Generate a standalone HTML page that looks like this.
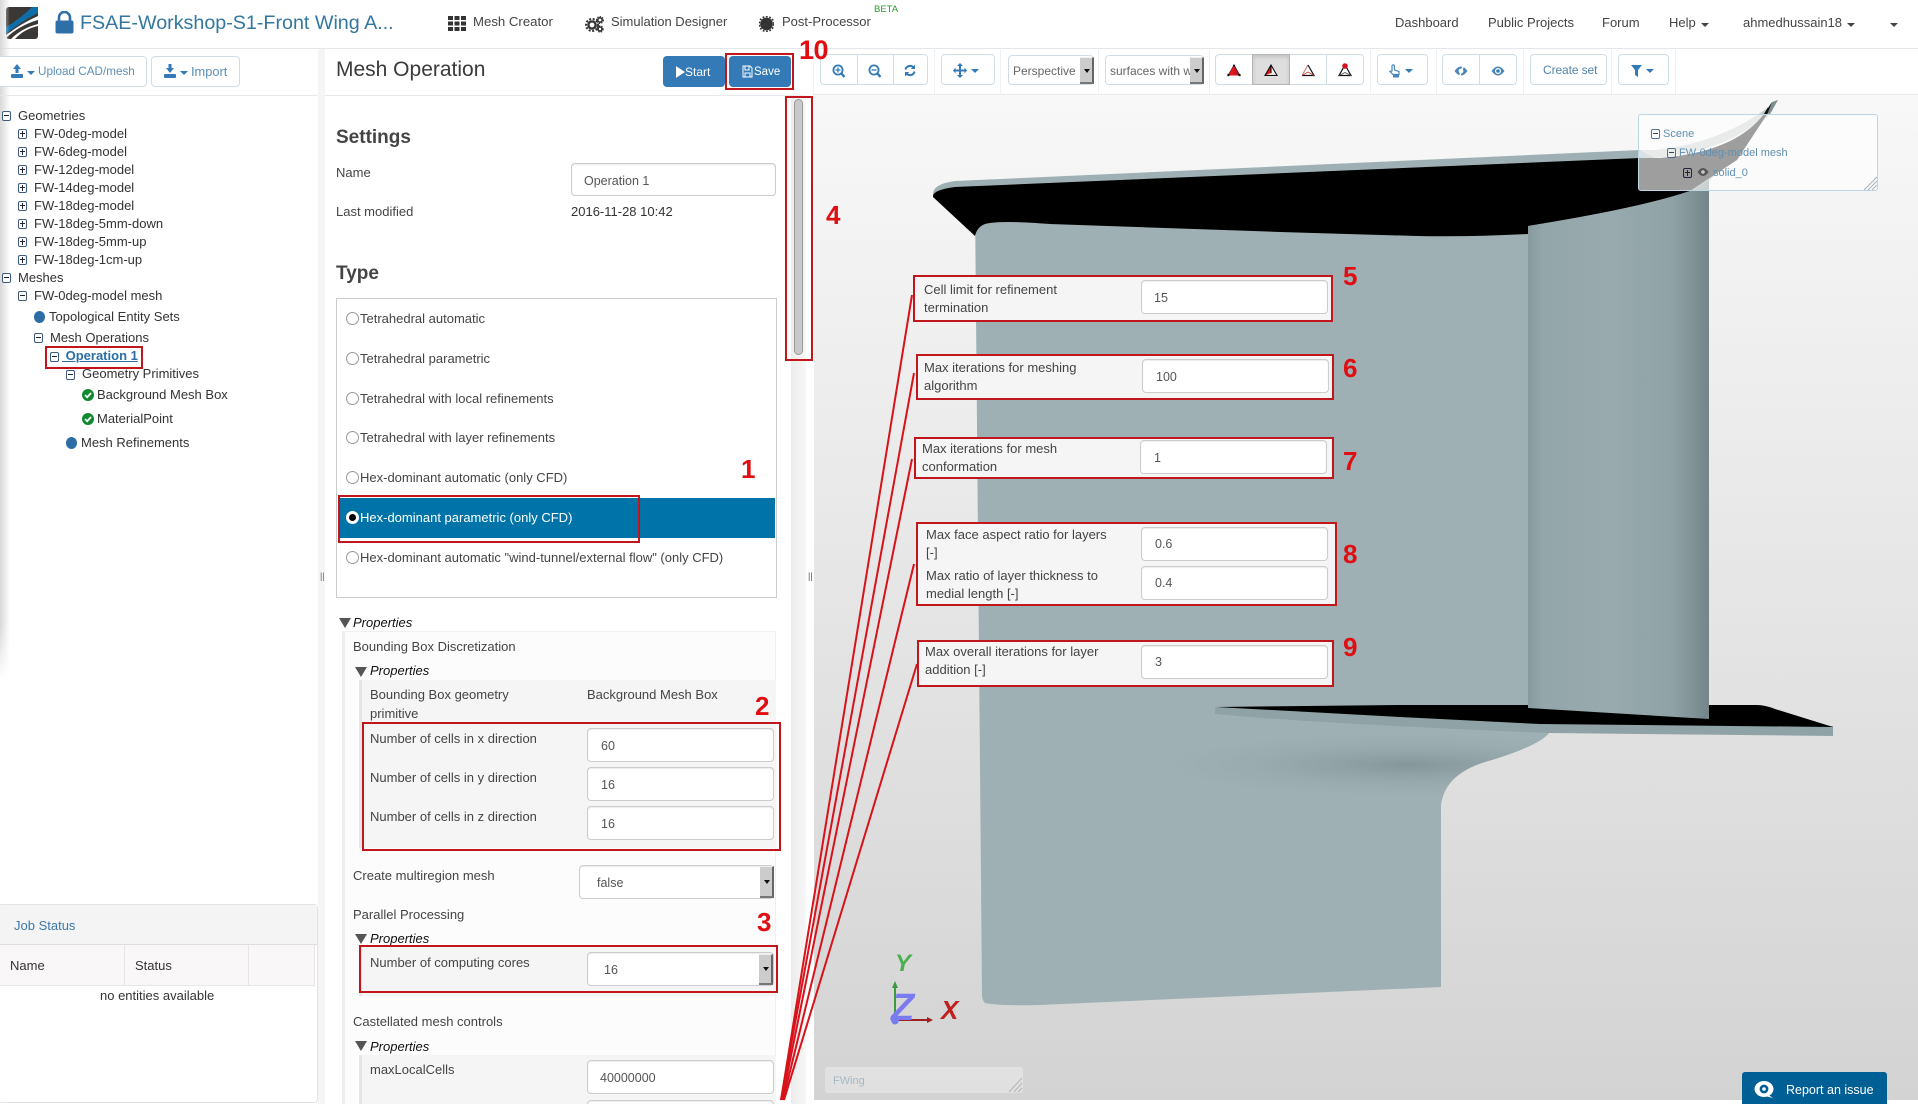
<!DOCTYPE html>
<html><head><meta charset="utf-8"><title>Mesh Operation</title>
<style>
html,body{margin:0;padding:0;background:#fff}
#p{position:relative;width:1918px;height:1104px;overflow:hidden;font-family:"Liberation Sans",sans-serif;font-size:13px;color:#444;background:#fff}
#p div,#p span,#p svg{position:absolute}
.t{white-space:nowrap;line-height:20px;height:20px;margin-top:-9px}
.z{margin-top:-10px}
.n{font-size:13px;color:#444;margin-top:-10px}
.b{color:#333}
.tr{color:#333;margin-top:-10px}
.r{color:#e00d12;font-weight:bold;font-size:26px;line-height:30px;height:30px;margin-top:-15px;white-space:nowrap}
.box{box-sizing:border-box;border:2px solid #c2161d}
.inp{box-sizing:border-box;background:#fff;border:1px solid #ccc;border-radius:4px;box-shadow:inset 0 1px 1px rgba(0,0,0,.08);color:#555;line-height:34px;font-size:12.5px}
.panel{box-sizing:border-box;background:#f5f5f5}
.m,.q{box-sizing:border-box;width:9px;height:10px;border:1px solid #3d5a80;border-radius:2px;margin-top:-5px;background:#fff}
.m:after,.q:after{content:"";position:absolute;left:1px;top:3px;width:5px;height:1px;background:#223}
.q:before{content:"";position:absolute;left:3px;top:1px;width:1px;height:6px;background:#223}
.dot{width:11px;height:12px;border-radius:50%;background:#2d6ca5;margin-top:-6px}
.ok{width:12px;height:12px;margin-top:-6px}
.btn{box-sizing:border-box;background:#fff;border:1px solid #cfdde6;border-radius:4px}
.sep{width:1px;background:#eef1f3;top:48px;height:46px}
.arr{box-sizing:border-box;background:#ccc;border-right:2px solid #666;border-bottom:2px solid #777;border-top:1px solid #eee}
.arr:after{content:"";position:absolute;left:4px;top:44%;border:3px solid transparent;border-top:4px solid #111;border-bottom:0}
.rad{box-sizing:border-box;width:13px;height:13px;border:1px solid #999;border-radius:50%;background:#fff;margin-top:-6px;left:346px}
.car{width:0;height:0;border-left:4px solid transparent;border-right:4px solid transparent;border-top:4px solid #444}
.tri{width:0;height:0;border-left:6px solid transparent;border-right:6px solid transparent;border-top:10px solid #555}
.it{font-style:italic;color:#111}
</style></head><body>
<div id="p">

<!-- viewer background -->
<div style="left:814px;top:95px;width:1104px;height:1005px;background:linear-gradient(#f8f8f8,#d3d3d3)"></div>

<!-- wing -->
<svg style="left:0;top:0" width="1918" height="1104" viewBox="0 0 1918 1104">
<defs>
<linearGradient id="g2" x1="0" x2="1" y1="0" y2="0"><stop offset="0" stop-color="#86999d"/><stop offset=".08" stop-color="#93a6aa"/><stop offset=".45" stop-color="#98aaae"/><stop offset=".8" stop-color="#8fa2a6"/><stop offset="1" stop-color="#748589"/></linearGradient>
<radialGradient id="sh"><stop offset="0" stop-color="#84969a"/><stop offset="1" stop-color="#9eb0b4" stop-opacity="0"/></radialGradient>
<clipPath id="bc"><path d="M975 200L1709 170V720L1549 733Q1540 745 1492 760Q1445 772 1441 805V987L1040 1005Q1000 1006 985 1003Q982 1000 982 995Z"/></clipPath>
</defs>
<path d="M933 195Q932 184 955 181L1640 150L1655 158L1690 191Z" fill="#9eb0b4"/>
<path d="M1640 150L1655 150Q1725 143 1778 100L1770 110Q1735 150 1655 158Z" fill="#c4cbcb"/>
<path d="M1690 191L1710 180L1773 110L1767 113Z" fill="#b4bebe"/>
<path d="M975 200L1709 170V720L1549 733Q1540 745 1492 760Q1445 772 1441 805V987L1040 1005Q1000 1006 985 1003Q982 1000 982 995Z" fill="#9eb0b4"/>
<g clip-path="url(#bc)"><ellipse cx="1410" cy="765" rx="280" ry="36" fill="url(#sh)"/></g>
<path d="M933 197Q932 190 955 187L1640 158L1660 158Q1735 152 1764 114L1768 107L1766 116L1737 160L1690 191Q1640 208 1528 226V234Q1470 237 1417 236L1280 232L1050 224Q1000 220 985 224Q977 227 975 236Z" fill="#000"/>
<path d="M1772 102L1778 100L1770 114L1766 113Z" fill="#7d8e91"/>
<path d="M1764 114L1772 102L1767 115Z" fill="#111"/>
<path d="M1215 707V714Q1300 722 1500 731L1549 733L1833 736V726L1400 712Z" fill="#8fa2a6"/>
<path d="M1216 707L1400 705L1757 705Q1765 705 1775 709L1833 727L1540 724L1400 717Z" fill="#000"/>
<path d="M1528 226Q1640 208 1690 191L1709 180V719L1528 708Z" fill="url(#g2)"/>
</svg>

<!-- top nav -->
<div style="left:0;top:48px;width:1918px;height:1px;background:#e4e7e9"></div>
<svg style="left:6px;top:7px" width="32" height="32" viewBox="0 0 32 32">
<rect width="32" height="32" rx="3" fill="#3b3735"/>
<path d="M32 0V6Q16 14 0 27V20Q14 12 26 0Z" fill="#0f6da8"/>
<path d="M32 9V13Q14 18 0 31V28Q16 16 32 9Z" fill="#fff"/>
<path d="M32 17V19Q18 22 9 32H5Q16 21 32 17Z" fill="#fff"/>
</svg>
<svg style="left:55px;top:11px" width="19" height="23" viewBox="0 0 19 23"><path d="M4 10V6.5a5.5 5.5 0 0 1 11 0V10" fill="none" stroke="#2f6fa8" stroke-width="2.6"/><rect x="0.5" y="9.5" width="18" height="13" rx="2" fill="#2f6fa8"/></svg>
<div class="t z" style="left:80px;top:23px;font-size:19.7px;color:#33779f">FSAE-Workshop-S1-Front Wing A...</div>
<svg style="left:448px;top:16px" width="18" height="15" viewBox="0 0 18 15" fill="#333"><rect width="5" height="4"/><rect x="6.5" width="5" height="4"/><rect x="13" width="5" height="4"/><rect y="5.5" width="5" height="4"/><rect x="6.5" y="5.5" width="5" height="4"/><rect x="13" y="5.5" width="5" height="4"/><rect y="11" width="5" height="4"/><rect x="6.5" y="11" width="5" height="4"/><rect x="13" y="11" width="5" height="4"/></svg>
<div class="t n" style="left:473px;top:22px;font-size:13.2px">Mesh Creator</div>
<svg style="left:585px;top:15px" width="19" height="18" viewBox="0 0 19 18" fill="none" stroke="#333"><circle cx="7" cy="10" r="3.6" stroke-width="2.4"/><circle cx="7" cy="10" r="6" stroke-width="2" stroke-dasharray="2 1.6"/><circle cx="15" cy="5" r="2.2" stroke-width="1.6"/><circle cx="15" cy="5" r="3.4" stroke-width="1.2" stroke-dasharray="1.4 1.2"/><circle cx="15" cy="14" r="2" stroke-width="1.6"/><circle cx="15" cy="14" r="3.1" stroke-width="1.2" stroke-dasharray="1.4 1.2"/></svg>
<div class="t n" style="left:611px;top:22px">Simulation Designer</div>
<svg style="left:759px;top:16px" width="15" height="16" viewBox="0 0 15 16"><circle cx="7.5" cy="8" r="6.4" fill="#333"/><circle cx="7.5" cy="8" r="7.4" fill="none" stroke="#333" stroke-width="1.6" stroke-dasharray="1.8 1.6"/></svg>
<div class="t n" style="left:782px;top:22px">Post-Processor</div>
<div class="t z" style="left:874px;top:10px;font-size:9.5px;color:#2e9a2e">BETA</div>
<div class="t n" style="left:1395px;top:23px">Dashboard</div>
<div class="t n" style="left:1488px;top:23px">Public Projects</div>
<div class="t n" style="left:1602px;top:23px">Forum</div>
<div class="t n" style="left:1669px;top:23px">Help</div><div class="car" style="left:1701px;top:23px"></div>
<div class="t n" style="left:1743px;top:23px">ahmedhussain18</div><div class="car" style="left:1847px;top:23px"></div>
<div class="car" style="left:1890px;top:23px"></div>

<!-- left panel -->
<div style="left:0;top:0;width:10px;height:680px;background:linear-gradient(90deg,#d8d8d8,rgba(255,255,255,0));-webkit-mask-image:linear-gradient(#000 92%,transparent)"></div>
<div style="left:318px;top:49px;width:7px;height:1055px;background:#f5f5f5"></div>
<div style="left:0;top:95px;width:318px;height:1px;background:#e6e8ea"></div>
<div style="left:325px;top:95px;width:466px;height:1px;background:#e6e8ea"></div>
<div class="t z" style="left:320px;top:576px;font-size:9px;color:#666">||</div>
<div class="btn" style="left:-5px;top:56px;width:152px;height:31px"></div>
<div class="btn" style="left:151px;top:56px;width:89px;height:31px"></div>
<svg style="left:11px;top:64px" width="12" height="14" viewBox="0 0 12 14" fill="#337ab7"><path d="M6 0L10 5H7.5V9H4.5V5H2Z"/><rect y="10" width="12" height="4" rx="1"/></svg>
<div class="car" style="left:27px;top:71px;border-top-color:#337ab7"></div>
<div class="t z" style="left:38px;top:72px;font-size:11.7px;color:#5b90b8">Upload CAD/mesh</div>
<svg style="left:164px;top:64px" width="12" height="14" viewBox="0 0 12 14" fill="#337ab7"><path d="M6 9L10 4H7.5V0H4.5V4H2Z"/><rect y="10" width="12" height="4" rx="1"/></svg>
<div class="car" style="left:180px;top:71px;border-top-color:#337ab7"></div>
<div class="t z" style="left:191px;top:72px;font-size:12.8px;color:#5b90b8">Import</div>

<!-- tree -->
<div class="m" style="left:2px;top:116px"></div><div class="t tr" style="left:18px;top:116px">Geometries</div>
<div class="q" style="left:18px;top:134px"></div><div class="t tr" style="left:34px;top:134px">FW-0deg-model</div>
<div class="q" style="left:18px;top:152px"></div><div class="t tr" style="left:34px;top:152px">FW-6deg-model</div>
<div class="q" style="left:18px;top:170px"></div><div class="t tr" style="left:34px;top:170px">FW-12deg-model</div>
<div class="q" style="left:18px;top:188px"></div><div class="t tr" style="left:34px;top:188px">FW-14deg-model</div>
<div class="q" style="left:18px;top:206px"></div><div class="t tr" style="left:34px;top:206px">FW-18deg-model</div>
<div class="q" style="left:18px;top:224px"></div><div class="t tr" style="left:34px;top:224px">FW-18deg-5mm-down</div>
<div class="q" style="left:18px;top:242px"></div><div class="t tr" style="left:34px;top:242px">FW-18deg-5mm-up</div>
<div class="q" style="left:18px;top:260px"></div><div class="t tr" style="left:34px;top:260px">FW-18deg-1cm-up</div>
<div class="m" style="left:2px;top:278px"></div><div class="t tr" style="left:18px;top:278px">Meshes</div>
<div class="m" style="left:18px;top:296px"></div><div class="t tr" style="left:34px;top:296px">FW-0deg-model mesh</div>
<div class="dot" style="left:34px;top:317px"></div><div class="t tr" style="left:49px;top:317px">Topological Entity Sets</div>
<div class="m" style="left:34px;top:338px"></div><div class="t tr" style="left:50px;top:338px">Mesh Operations</div>
<div class="m" style="left:50px;top:357px"></div><div class="t z" style="left:62px;top:356px;color:#2a6ea6;font-weight:bold;text-decoration:underline;white-space:pre"> Operation 1</div>
<div class="box" style="left:45px;top:346px;width:98px;height:23px"></div>
<div class="m" style="left:66px;top:375px"></div><div class="t tr" style="left:82px;top:374px">Geometry Primitives</div>
<svg class="ok" style="left:82px;top:395px" width="12" height="12" viewBox="0 0 12 12"><circle cx="6" cy="6" r="6" fill="#0d8a2f"/><path d="M3 6L5.2 8.2L9 4" fill="none" stroke="#fff" stroke-width="1.8"/></svg><div class="t tr" style="left:97px;top:395px">Background Mesh Box</div>
<svg class="ok" style="left:82px;top:419px" width="12" height="12" viewBox="0 0 12 12"><circle cx="6" cy="6" r="6" fill="#0d8a2f"/><path d="M3 6L5.2 8.2L9 4" fill="none" stroke="#fff" stroke-width="1.8"/></svg><div class="t tr" style="left:97px;top:419px">MaterialPoint</div>
<div class="dot" style="left:66px;top:443px"></div><div class="t tr" style="left:81px;top:443px">Mesh Refinements</div>

<!-- job status -->
<div style="left:-2px;top:904px;width:320px;height:199px;box-sizing:border-box;border:1px solid #e3e3e3;border-radius:4px"></div>
<div style="left:0;top:905px;width:317px;height:39px;background:#f4f4f4;border-bottom:1px solid #ddd"></div>
<div class="t" style="left:14px;top:925px;color:#3d78a8">Job Status</div>
<div style="left:0;top:945px;width:314px;height:40px;background:#f9f7f7;border-bottom:1px solid #e6e6e6;border-right:1px solid #e6e6e6"></div>
<div style="left:124px;top:945px;width:1px;height:40px;background:#e6e6e6"></div>
<div style="left:248px;top:945px;width:1px;height:40px;background:#e6e6e6"></div>
<div class="t b" style="left:10px;top:965px">Name</div>
<div class="t b" style="left:135px;top:965px">Status</div>
<div class="t b" style="left:100px;top:995px">no entities available</div>

<!-- center panel header -->
<div class="t z" style="left:336px;top:70px;font-size:21px;color:#3a3a3a">Mesh Operation</div>
<div style="left:663px;top:56px;width:62px;height:31px;background:#337ab7;border-radius:4px"></div>
<div style="left:729px;top:56px;width:62px;height:31px;background:#337ab7;border-radius:4px"></div>
<svg style="left:676px;top:66px" width="9" height="12" viewBox="0 0 10 13"><path d="M0 0L10 6.5L0 13Z" fill="#fff"/></svg>
<div class="t z" style="left:685px;top:72px;font-size:12px;color:#fff">Start</div>
<svg style="left:742px;top:65px" width="11" height="13" viewBox="0 0 11 13"><path d="M1 1H8L10 3V12H1Z M3 1V5H7V1 M3 12V8H8V12" fill="none" stroke="#fff"/></svg>
<div class="t z" style="left:754px;top:72px;font-size:11.5px;color:#fff">Save</div>
<div class="box" style="left:725px;top:53px;width:69px;height:37px"></div>

<!-- settings -->
<div class="t" style="left:336px;top:137px;font-size:19px;font-weight:bold;color:#444">Settings</div>
<div class="t" style="left:336px;top:172px">Name</div>
<div class="inp" style="left:571px;top:163px;width:205px;height:33px;padding-left:12px">Operation 1</div>
<div class="t" style="left:336px;top:211px">Last modified</div>
<div class="t" style="left:571px;top:211px;color:#333">2016-11-28 10:42</div>
<div class="t" style="left:336px;top:273px;font-size:19px;font-weight:bold;color:#444">Type</div>

<div style="left:336px;top:298px;width:441px;height:300px;box-sizing:border-box;border:1px solid #ccc"></div>
<div style="left:339px;top:498px;width:436px;height:40px;background:#0074a8"></div>
<div class="rad" style="top:318px"></div><div class="t" style="left:360px;top:318px">Tetrahedral automatic</div>
<div class="rad" style="top:358px"></div><div class="t" style="left:360px;top:358px">Tetrahedral parametric</div>
<div class="rad" style="top:398px"></div><div class="t" style="left:360px;top:398px">Tetrahedral with local refinements</div>
<div class="rad" style="top:437px"></div><div class="t" style="left:360px;top:437px">Tetrahedral with layer refinements</div>
<div class="rad" style="top:477px"></div><div class="t" style="left:360px;top:477px">Hex-dominant automatic (only CFD)</div>
<div class="rad" style="top:517px;border:3px solid #fff;background:#000"></div><div class="t" style="left:360px;top:517px;color:#fff">Hex-dominant parametric (only CFD)</div>
<div class="rad" style="top:557px"></div><div class="t" style="left:360px;top:557px">Hex-dominant automatic "wind-tunnel/external flow" (only CFD)</div>
<div class="box" style="left:338px;top:495px;width:302px;height:48px"></div>
<div class="r" style="left:741px;top:469px">1</div>

<!-- properties -->
<div class="tri" style="left:339px;top:618px"></div><div class="t it" style="left:353px;top:622px">Properties</div>
<div style="left:342px;top:631px;width:434px;height:473px;background:#fcfcfc;box-sizing:border-box;border-left:3px solid #eee;border-top:1px solid #f0f0f0;border-right:1px solid #f0f0f0"></div>
<div class="t" style="left:353px;top:646px">Bounding Box Discretization</div>
<div class="tri" style="left:355px;top:667px"></div><div class="t it" style="left:370px;top:670px">Properties</div>
<div style="left:359px;top:680px;width:417px;height:168px;background:#f5f5f5;box-sizing:border-box;border-left:3px solid #e6e6e6"></div>
<div class="t" style="left:370px;top:694px">Bounding Box geometry</div>
<div class="t" style="left:370px;top:713px">primitive</div>
<div class="t" style="left:587px;top:694px">Background Mesh Box</div>
<div class="r" style="left:755px;top:706px">2</div>
<div class="box" style="left:362px;top:722px;width:419px;height:129px"></div>
<div class="t" style="left:370px;top:738px">Number of cells in x direction</div>
<div class="t" style="left:370px;top:777px">Number of cells in y direction</div>
<div class="t" style="left:370px;top:816px">Number of cells in z direction</div>
<div class="inp" style="left:587px;top:728px;width:187px;height:34px;padding-left:13px">60</div>
<div class="inp" style="left:587px;top:767px;width:187px;height:34px;padding-left:13px">16</div>
<div class="inp" style="left:587px;top:806px;width:187px;height:34px;padding-left:13px">16</div>
<div class="t" style="left:353px;top:875px">Create multiregion mesh</div>
<div class="inp" style="left:579px;top:865px;width:195px;height:34px;padding-left:17px">false</div>
<div class="arr" style="left:760px;top:866px;width:14px;height:32px"></div>
<div class="t" style="left:353px;top:914px">Parallel Processing</div>
<div class="r" style="left:757px;top:922px">3</div>
<div class="tri" style="left:355px;top:934px"></div><div class="t it" style="left:370px;top:938px">Properties</div>
<div style="left:359px;top:946px;width:417px;height:50px;background:#f5f5f5;box-sizing:border-box;border-left:3px solid #e6e6e6"></div>
<div class="box" style="left:359px;top:945px;width:419px;height:48px"></div>
<div class="t" style="left:370px;top:962px">Number of computing cores</div>
<div class="inp" style="left:587px;top:952px;width:187px;height:34px;padding-left:16px">16</div>
<div class="arr" style="left:759px;top:954px;width:14px;height:31px"></div>
<div class="t" style="left:353px;top:1021px">Castellated mesh controls</div>
<div class="tri" style="left:355px;top:1041px"></div><div class="t it" style="left:370px;top:1046px">Properties</div>
<div style="left:359px;top:1055px;width:417px;height:49px;background:#f5f5f5;box-sizing:border-box;border-left:3px solid #e6e6e6"></div>
<div class="t" style="left:370px;top:1069px">maxLocalCells</div>
<div class="inp" style="left:587px;top:1060px;width:187px;height:34px;padding-left:12px">40000000</div>
<div class="inp" style="left:587px;top:1100px;width:187px;height:34px"></div>

<!-- scrollbar gutter -->
<div style="left:791px;top:95px;width:15px;height:1009px;background:linear-gradient(90deg,#ececec,#f7f7f7)"></div>
<div style="left:806px;top:95px;width:8px;height:1009px;background:#fff"></div>
<div class="t z" style="left:808px;top:576px;font-size:9px;color:#555">||</div>
<div style="left:794px;top:99px;width:9px;height:256px;background:#c9c9c9;border:1px solid #999;border-radius:5px;box-sizing:border-box"></div>
<div class="box" style="left:785px;top:96px;width:28px;height:265px"></div>
<div class="r" style="left:826px;top:215px">4</div>

<!-- toolbar -->
<div style="left:812px;top:94px;width:1106px;height:1px;background:#e8ebed"></div>
<div class="sep" style="left:813px"></div><div class="sep" style="left:934px"></div><div class="sep" style="left:1000px"></div><div class="sep" style="left:1098px"></div><div class="sep" style="left:1209px"></div><div class="sep" style="left:1370px"></div><div class="sep" style="left:1436px"></div><div class="sep" style="left:1523px"></div><div class="sep" style="left:1611px"></div><div class="sep" style="left:1675px"></div>
<div class="btn" style="left:820px;top:54px;width:108px;height:31px"></div>
<div style="left:857px;top:55px;width:1px;height:29px;background:#cfdde6"></div>
<div style="left:893px;top:55px;width:1px;height:29px;background:#cfdde6"></div>
<svg style="left:832px;top:64px" width="13" height="14" viewBox="0 0 13 14" fill="none" stroke="#337ab7" stroke-width="1.8"><circle cx="6" cy="6" r="4.6"/><path d="M9.5 9.5L12.5 13" stroke-width="2.4"/><path d="M3.5 6H8.5M6 3.5V8.5" stroke-width="1.3"/></svg>
<svg style="left:868px;top:64px" width="13" height="14" viewBox="0 0 13 14" fill="none" stroke="#337ab7" stroke-width="1.8"><circle cx="6" cy="6" r="4.6"/><path d="M9.5 9.5L12.5 13" stroke-width="2.4"/><path d="M3.5 6H8.5" stroke-width="1.3"/></svg>
<svg style="left:904px;top:64px" width="12" height="13" viewBox="0 0 12 13" fill="none" stroke="#337ab7" stroke-width="2"><path d="M1.5 5.5A4.6 4.6 0 0 1 9.6 3.6"/><path d="M10.5 7.5A4.6 4.6 0 0 1 2.4 9.4"/><path d="M11 0.5V5H6.8Z M1 12.5V8H5.2Z" fill="#337ab7" stroke="none"/></svg>
<div class="btn" style="left:941px;top:54px;width:54px;height:31px"></div>
<svg style="left:953px;top:63px" width="14" height="15" viewBox="0 0 14 15" fill="#337ab7"><path d="M7 0L10 3H8V6.5H11.5V4.5L14 7.5L11.5 10.5V8.5H8V12H10L7 15L4 12H6V8.5H2.5V10.5L0 7.5L2.5 4.5V6.5H6V3H4Z"/></svg>
<div class="car" style="left:971px;top:69px;border-top-color:#337ab7"></div>
<div class="btn" style="left:1008px;top:55px;width:86px;height:30px"></div>
<div class="t z" style="left:1013px;top:71px;font-size:12px;color:#666">Perspective</div>
<div class="arr" style="left:1080px;top:57px;width:14px;height:27px"></div>
<div class="btn" style="left:1105px;top:55px;width:99px;height:30px;overflow:hidden"></div>
<div class="t z" style="left:1110px;top:71px;font-size:12px;color:#666;width:80px;overflow:hidden">surfaces with w</div>
<div class="arr" style="left:1190px;top:57px;width:14px;height:27px"></div>
<div class="btn" style="left:1215px;top:54px;width:149px;height:31px"></div>
<div style="left:1252px;top:54px;width:38px;height:31px;background:#dedede;box-sizing:border-box;border:1px solid #b5b5b5;box-shadow:inset 0 2px 4px rgba(0,0,0,.12)"></div>
<div style="left:1326px;top:55px;width:1px;height:29px;background:#cfdde6"></div>
<svg style="left:1227px;top:64px" width="14" height="14" viewBox="0 0 14 14"><path d="M7 1L13 11.5L7 9L1 11.5Z" fill="#d5141a" stroke="#222" stroke-width=".8"/><path d="M7 1L7 9L13 11.5L1 11.5Z" fill="#e0161c"/><circle cx="7" cy="1.5" r="1" fill="#111"/><circle cx="1.5" cy="11" r="1.2" fill="#111"/><circle cx="12.5" cy="11" r="1.2" fill="#111"/></svg>
<svg style="left:1264px;top:64px" width="14" height="14" viewBox="0 0 14 14"><path d="M7 1L1 11.5L7 9Z" fill="#e0161c"/><path d="M7 1L13 11.5L7 9Z" fill="#f2f2f2"/><path d="M7 1L13 11.5L1 11.5Z M7 1V9" fill="none" stroke="#111" stroke-width="1.1"/></svg>
<svg style="left:1301px;top:64px" width="14" height="14" viewBox="0 0 14 14"><path d="M7 1L1 11.5" stroke="#d08080" stroke-width="1.2"/><path d="M7 1L13 11.5L1 11.5" fill="none" stroke="#111" stroke-width="1.2"/><path d="M1 11.5L7 8L13 11.5" fill="none" stroke="#c44" stroke-width=".9"/></svg>
<svg style="left:1338px;top:63px" width="14" height="15" viewBox="0 0 14 15"><path d="M7 2L13 12.5L1 12.5Z" fill="none" stroke="#111" stroke-width="1.2"/><path d="M1 12.5L7 9.5L13 12.5" fill="none" stroke="#555" stroke-width=".9"/><circle cx="7" cy="3" r="2.8" fill="#d5141a"/></svg>
<div class="btn" style="left:1377px;top:54px;width:51px;height:31px"></div>
<svg style="left:1389px;top:64px" width="12" height="14" viewBox="0 0 12 14" fill="none" stroke="#4a86b8" stroke-width="1.2"><path d="M3 7V2a1.2 1.2 0 0 1 2.4 0V6L10 7.5V10.5H4L1 7.5Z"/><rect x="4" y="10.5" width="6" height="3" fill="#4a86b8" stroke="none"/></svg>
<div class="car" style="left:1405px;top:69px;border-top-color:#337ab7"></div>
<div class="btn" style="left:1442px;top:54px;width:75px;height:31px"></div>
<div style="left:1479px;top:55px;width:1px;height:29px;background:#cfdde6"></div>
<svg style="left:1454px;top:65px" width="14" height="12" viewBox="0 0 14 12"><path d="M0.5 6Q7 -3 13.5 6Q7 15 0.5 6Z" fill="#4a86b8"/><circle cx="7" cy="6" r="2.4" fill="#fff"/><path d="M10 -1L5 13" stroke="#fff" stroke-width="1.5"/></svg>
<svg style="left:1491px;top:65px" width="14" height="12" viewBox="0 0 14 12"><path d="M0.5 6Q7 -3 13.5 6Q7 15 0.5 6Z" fill="#4a86b8"/><circle cx="7" cy="6" r="3" fill="#fff"/><circle cx="7" cy="6" r="1.8" fill="#337ab7"/></svg>
<div class="btn" style="left:1530px;top:54px;width:77px;height:31px"></div>
<div class="t z" style="left:1543px;top:70px;font-size:12px;color:#4f84ad;letter-spacing:-.1px">Create set</div>
<div class="btn" style="left:1618px;top:54px;width:51px;height:31px"></div>
<svg style="left:1631px;top:65px" width="11" height="12" viewBox="0 0 11 12"><path d="M0 0H11L7 5V12L4 10V5Z" fill="#337ab7"/></svg>
<div class="car" style="left:1646px;top:69px;border-top-color:#337ab7"></div>

<div class="r" style="left:799px;top:50px;font-size:27px;letter-spacing:-.5px">10</div>

<!-- scene panel -->
<div style="left:1638px;top:114px;width:240px;height:77px;box-sizing:border-box;background:rgba(255,255,255,.62);border:1px solid #bcd6e4;border-radius:3px"></div>
<div class="m" style="left:1651px;top:134px;opacity:.85;background:transparent"></div><div class="t" style="left:1663px;top:133px;font-size:11px;color:#5f8fb0">Scene</div>
<div class="m" style="left:1667px;top:153px;opacity:.85;background:transparent"></div><div class="t" style="left:1679px;top:152px;font-size:11px;color:#5f8fb0">FW-0deg-model mesh</div>
<div class="q" style="left:1683px;top:173px;border-color:#224;background:transparent"></div>
<svg style="left:1697px;top:167px" width="12" height="10" viewBox="0 0 12 10"><path d="M0.5 5Q6 -3 11.5 5Q6 13 0.5 5Z" fill="#555"/><circle cx="6" cy="5" r="1.8" fill="#ccc"/></svg>
<div class="t" style="left:1713px;top:172px;font-size:11px;color:#5f8fb0">solid_0</div>
<svg style="left:1862px;top:175px" width="16" height="16" viewBox="0 0 16 16" stroke="#a8b4ba" fill="none"><path d="M15 2L2 15M15 6L6 15M15 10L10 15"/></svg>

<!-- axis -->
<div class="t z" style="left:895px;top:964px;font-size:24px;font-weight:bold;font-style:italic;color:#4cb050">Y</div>
<svg style="left:885px;top:978px" width="55" height="48" viewBox="0 0 55 48"><path d="M10 6V42" stroke="#3c9a40" stroke-width="2"/><path d="M10 3L13 10H7Z" fill="#3c9a40"/><path d="M14 42H44" stroke="#a02020" stroke-width="2"/><path d="M48 42L42 39V45Z" fill="#a02020"/><ellipse cx="10" cy="42" rx="4" ry="4.5" fill="#7b7bf0"/></svg>
<div class="t z" style="left:891px;top:1008px;font-size:38px;line-height:38px;height:38px;margin-top:-19px;font-weight:bold;font-style:italic;color:#7b7bf0">Z</div>
<div class="t z" style="left:941px;top:1010px;font-size:26px;font-weight:bold;font-style:italic;color:#c02020">X</div>

<div style="left:825px;top:1067px;width:198px;height:26px;background:rgba(255,255,255,.3);border-radius:3px"></div>
<div class="t z" style="left:833px;top:1081px;font-size:11px;color:#a5b8c4">FWing</div>
<svg style="left:1008px;top:1077px" width="15" height="16" viewBox="0 0 15 16" stroke="#b5b5b5" fill="none"><path d="M14 1L1 15M14 6L6 15M14 11L10 15"/></svg>

<div style="left:1742px;top:1072px;width:145px;height:32px;background:#005f94;border-radius:3px 3px 0 0"></div>
<svg style="left:1752px;top:1081px" width="24" height="17" viewBox="0 0 24 17"><ellipse cx="12" cy="8" rx="9.5" ry="8" fill="#fff"/><path d="M15 13L21 17L13 15Z" fill="#fff"/><circle cx="12" cy="8" r="4.4" fill="#005f94"/><circle cx="12" cy="8" r="1.8" fill="#fff"/></svg>
<div class="t z" style="left:1786px;top:1090px;font-size:12.5px;color:#fff">Report an issue</div>

<!-- overlay callouts -->
<div class="panel" style="left:913px;top:275px;width:420px;height:47px"></div>
<div class="t" style="left:924px;top:289px">Cell limit for refinement</div>
<div class="t" style="left:924px;top:307px">termination</div>
<div class="inp" style="left:1141px;top:280px;width:187px;height:34px;padding-left:12px">15</div>
<div class="box" style="left:913px;top:275px;width:420px;height:47px"></div>
<div class="r" style="left:1343px;top:276px">5</div>

<div class="panel" style="left:916px;top:354px;width:418px;height:46px"></div>
<div class="t" style="left:924px;top:367px">Max iterations for meshing</div>
<div class="t" style="left:924px;top:385px">algorithm</div>
<div class="inp" style="left:1142px;top:359px;width:187px;height:34px;padding-left:13px">100</div>
<div class="box" style="left:916px;top:354px;width:418px;height:46px"></div>
<div class="r" style="left:1343px;top:368px">6</div>

<div class="panel" style="left:914px;top:437px;width:420px;height:42px"></div>
<div class="t" style="left:922px;top:448px">Max iterations for mesh</div>
<div class="t" style="left:922px;top:466px">conformation</div>
<div class="inp" style="left:1140px;top:440px;width:187px;height:34px;padding-left:13px">1</div>
<div class="box" style="left:914px;top:437px;width:420px;height:42px"></div>
<div class="r" style="left:1343px;top:461px">7</div>

<div class="panel" style="left:916px;top:522px;width:421px;height:84px"></div>
<div class="t" style="left:926px;top:534px">Max face aspect ratio for layers</div>
<div class="t" style="left:926px;top:552px">[-]</div>
<div class="t" style="left:926px;top:575px">Max ratio of layer thickness to</div>
<div class="t" style="left:926px;top:593px">medial length [-]</div>
<div class="inp" style="left:1141px;top:527px;width:187px;height:34px;line-height:32px;padding-left:13px">0.6</div>
<div class="inp" style="left:1141px;top:566px;width:187px;height:34px;line-height:32px;padding-left:13px">0.4</div>
<div class="box" style="left:916px;top:522px;width:421px;height:84px"></div>
<div class="r" style="left:1343px;top:554px">8</div>

<div class="panel" style="left:917px;top:640px;width:417px;height:47px"></div>
<div class="t" style="left:925px;top:651px">Max overall iterations for layer</div>
<div class="t" style="left:925px;top:669px">addition [-]</div>
<div class="inp" style="left:1141px;top:645px;width:187px;height:34px;line-height:32px;padding-left:13px">3</div>
<div class="box" style="left:917px;top:640px;width:417px;height:47px"></div>
<div class="r" style="left:1343px;top:647px">9</div>

<svg style="left:0;top:0" width="1918" height="1104" viewBox="0 0 1918 1104" fill="none" stroke="#d8121a" stroke-width="2">
<path d="M912 295L781 1100"/><path d="M914 373L781 1100"/><path d="M912 459L782 1100"/><path d="M914 564L783 1100"/><path d="M917 664L784 1100"/>
</svg>
</div>
</body></html>
